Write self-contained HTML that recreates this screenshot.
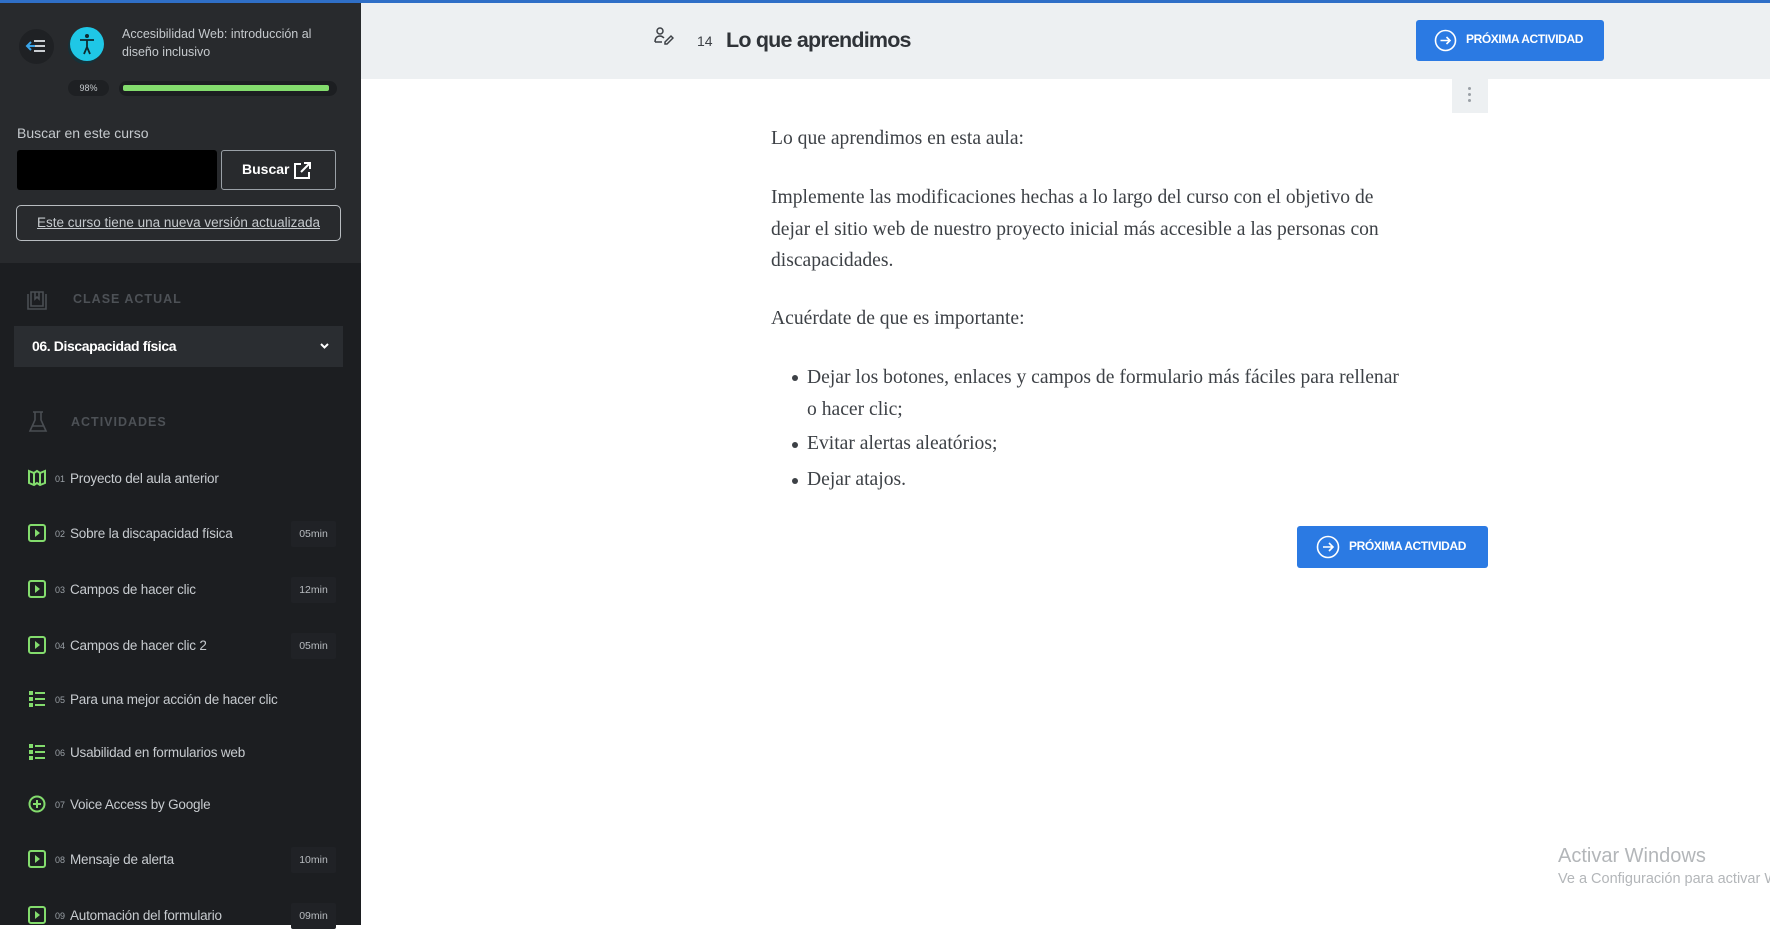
<!DOCTYPE html>
<html><head><meta charset="utf-8"><style>
*{margin:0;padding:0;box-sizing:border-box}
body{width:1770px;height:925px;overflow:hidden;background:#fff;font-family:"Liberation Sans",sans-serif;position:relative}
.abs{position:absolute}
#topline{left:0;top:0;width:1770px;height:3px;background:#2f6fc7;z-index:5}
#side{left:0;top:0;width:361px;height:925px;background:#1c1e21}
#sidetop{left:0;top:0;width:361px;height:263px;background:#282a2d}
.t{white-space:nowrap}
.item{position:absolute;left:0;width:361px;height:30px}
.item svg{position:absolute;left:28px;top:4px}
.item .n{position:absolute;left:55px;top:9px;font-size:9px;color:#9aa0a6}
.item .l{position:absolute;left:70px;top:6px;font-size:13.5px;color:#c7cbcf;letter-spacing:-0.2px}
.item .d{position:absolute;left:291px;top:1px;width:45px;height:26px;background:#202226;color:#b8bcc0;font-size:10.5px;text-align:center;line-height:26px;border-radius:2px}
.btn{background:#2b7ae3;border-radius:3px;color:#fff;font-weight:bold;font-size:12px;letter-spacing:-0.3px}
.p{font-family:"Liberation Serif",serif;font-size:19.6px;color:#3d4146;white-space:nowrap;position:absolute;left:771px}
</style></head><body>
<div id="topline" class="abs"></div>
<div id="side" class="abs"></div>
<div id="sidetop" class="abs"></div>
<div class="abs" style="left:19px;top:29px;width:35px;height:35px;border-radius:50%;background:#1f2124"></div>
<svg class="abs" style="left:25px;top:37px" width="22" height="18" viewBox="0 0 22 18"><path d="M9 4H20M9 9H20M9 14H20" stroke="#c9cdd1" stroke-width="2"/><path d="M2 9H10M6 5L2 9L6 13" stroke="#3aa4e8" stroke-width="2" fill="none"/></svg>
<div class="abs" style="left:70px;top:27px;width:34px;height:34px;border-radius:50%;background:#1fc7e6;box-shadow:-2px 3px 0 #15323a"></div>
<svg class="abs" style="left:78px;top:33px" width="18" height="22" viewBox="0 0 18 22"><circle cx="9" cy="3" r="2" fill="#0e2a30"/><path d="M2 7H16M9 7V14M9 14L6 21M9 14L12 21" stroke="#0e2a30" stroke-width="1.8" fill="none"/></svg>
<div class="abs t" style="left:122px;top:25px;font-size:12.5px;color:#c5c9cd;line-height:18px">Accesibilidad Web: introducción al<br>diseño inclusivo</div>
<div class="abs" style="left:68px;top:80px;width:41px;height:16px;border-radius:8px;background:#1e2023;color:#c5c9cd;font-size:9px;text-align:center;line-height:16px">98%</div>
<div class="abs" style="left:119px;top:81px;width:218px;height:15px;border-radius:8px;background:#1c1e21"></div>
<div class="abs" style="left:123px;top:85px;width:206px;height:6px;border-radius:2px;background:#83dc6d"></div>
<div class="abs t" style="left:17px;top:125px;font-size:14px;color:#c5c9cd">Buscar en este curso</div>
<div class="abs" style="left:17px;top:150px;width:200px;height:40px;background:#000;border-radius:3px"></div>
<div class="abs" style="left:221px;top:150px;width:115px;height:40px;border:1px solid #9aa0a6;border-radius:3px;color:#fff;font-weight:bold;font-size:14px;line-height:36px;padding-left:20px">Buscar</div>
<svg class="abs" style="left:293px;top:161px" width="19" height="19" viewBox="0 0 19 19"><path d="M8 3H2V17H16V11M11 2H17V8M17 2L8 11" stroke="#fff" stroke-width="2" fill="none"/></svg>
<div class="abs" style="left:16px;top:205px;width:325px;height:36px;border:1px solid #b8bcc0;border-radius:5px;text-align:center;line-height:34px;font-size:13.5px;color:#c5c9cd;text-decoration:underline">Este curso tiene una nueva versión actualizada</div>
<svg class="abs" style="left:26px;top:291px" width="22" height="20" viewBox="0 0 22 20"><path d="M2 3V18H20V3M5 1V15H17V1Z M9 1V8L11 6L13 8V1" stroke="#4a4e53" stroke-width="1.6" fill="none"/></svg>
<div class="abs t" style="left:73px;top:292px;font-size:12.5px;font-weight:bold;letter-spacing:1px;color:#4d5156">CLASE ACTUAL</div>
<div class="abs" style="left:14px;top:326px;width:329px;height:41px;background:#2a2d31"></div>
<div class="abs t" style="left:32px;top:338px;font-size:14px;font-weight:bold;color:#fff;letter-spacing:-0.4px">06. Discapacidad física</div>
<svg class="abs" style="left:319px;top:342px" width="11" height="8" viewBox="0 0 11 8"><path d="M2 2L5.5 5.5L9 2" stroke="#fff" stroke-width="2" fill="none"/></svg>
<svg class="abs" style="left:28px;top:410px" width="20" height="24" viewBox="0 0 20 24"><path d="M5 2H15M7 2V10L2 21H18L13 10V2M4 16H16" stroke="#4a4e53" stroke-width="1.6" fill="none"/></svg>
<div class="abs t" style="left:71px;top:415px;font-size:12.5px;font-weight:bold;letter-spacing:1px;color:#4d5156">ACTIVIDADES</div>

<div class="item" style="top:465px"><svg width="18" height="18" viewBox="0 0 18 18"><path d="M1 2L6 4L9 2L12 4L17 2V14L12 16L9 14L6 16L1 14Z M6 4V16M12 4V16" stroke="#83dc6d" stroke-width="2" fill="none"/></svg><span class="n">01</span><span class="l">Proyecto del aula anterior</span></div>
<div class="item" style="top:520px"><svg width="18" height="18" viewBox="0 0 18 18"><rect x="1" y="1" width="16" height="16" rx="2" stroke="#83dc6d" stroke-width="2" fill="none"/><path d="M7 5L12 9L7 13Z" fill="#83dc6d"/></svg><span class="n">02</span><span class="l">Sobre la discapacidad física</span><span class="d">05min</span></div>
<div class="item" style="top:576px"><svg width="18" height="18" viewBox="0 0 18 18"><rect x="1" y="1" width="16" height="16" rx="2" stroke="#83dc6d" stroke-width="2" fill="none"/><path d="M7 5L12 9L7 13Z" fill="#83dc6d"/></svg><span class="n">03</span><span class="l">Campos de hacer clic</span><span class="d">12min</span></div>
<div class="item" style="top:632px"><svg width="18" height="18" viewBox="0 0 18 18"><rect x="1" y="1" width="16" height="16" rx="2" stroke="#83dc6d" stroke-width="2" fill="none"/><path d="M7 5L12 9L7 13Z" fill="#83dc6d"/></svg><span class="n">04</span><span class="l">Campos de hacer clic 2</span><span class="d">05min</span></div>
<div class="item" style="top:686px"><svg width="18" height="18" viewBox="0 0 18 18"><rect x="1" y="1" width="4" height="4" fill="#83dc6d"/><rect x="1" y="7" width="4" height="4" fill="#83dc6d"/><rect x="1" y="13" width="4" height="4" fill="#83dc6d"/><path d="M7 3H17M7 9H17M7 15H17" stroke="#83dc6d" stroke-width="2"/></svg><span class="n">05</span><span class="l">Para una mejor acción de hacer clic</span></div>
<div class="item" style="top:739px"><svg width="18" height="18" viewBox="0 0 18 18"><rect x="1" y="1" width="4" height="4" fill="#83dc6d"/><rect x="1" y="7" width="4" height="4" fill="#83dc6d"/><rect x="1" y="13" width="4" height="4" fill="#83dc6d"/><path d="M7 3H17M7 9H17M7 15H17" stroke="#83dc6d" stroke-width="2"/></svg><span class="n">06</span><span class="l">Usabilidad en formularios web</span></div>
<div class="item" style="top:791px"><svg width="18" height="18" viewBox="0 0 18 18"><circle cx="9" cy="9" r="7.5" stroke="#83dc6d" stroke-width="2" fill="none"/><path d="M9 5V13M5 9H13" stroke="#83dc6d" stroke-width="2"/></svg><span class="n">07</span><span class="l">Voice Access by Google</span></div>
<div class="item" style="top:846px"><svg width="18" height="18" viewBox="0 0 18 18"><rect x="1" y="1" width="16" height="16" rx="2" stroke="#83dc6d" stroke-width="2" fill="none"/><path d="M7 5L12 9L7 13Z" fill="#83dc6d"/></svg><span class="n">08</span><span class="l">Mensaje de alerta</span><span class="d">10min</span></div>
<div class="item" style="top:902px"><svg width="18" height="18" viewBox="0 0 18 18"><rect x="1" y="1" width="16" height="16" rx="2" stroke="#83dc6d" stroke-width="2" fill="none"/><path d="M7 5L12 9L7 13Z" fill="#83dc6d"/></svg><span class="n">09</span><span class="l">Automación del formulario</span><span class="d">09min</span></div>

<div class="abs" style="left:361px;top:3px;width:1409px;height:76px;background:#edf0f2"></div>
<svg class="abs" style="left:654px;top:27px" width="20" height="18" viewBox="0 0 20 18"><circle cx="6" cy="4" r="3" stroke="#3d4146" stroke-width="1.5" fill="none"/><path d="M1 15C1 11 3 9 6 9C8 9 9 10 10 11M1 15H8M11 15L17 9L19 11L13 17H11Z" stroke="#3d4146" stroke-width="1.5" fill="none"/></svg>
<div class="abs t" style="left:697px;top:33px;font-size:14px;color:#3d4146">14</div>
<div class="abs t" style="left:726px;top:28px;font-size:21.5px;font-weight:bold;color:#2f3338;letter-spacing:-0.8px">Lo que aprendimos</div>
<div class="abs btn" style="left:1416px;top:20px;width:188px;height:41px"></div>
<svg class="abs" style="left:1434px;top:29px" width="23" height="23" viewBox="0 0 23 23"><circle cx="11.5" cy="11.5" r="10" stroke="#fff" stroke-width="1.6" fill="none"/><path d="M6.5 11.5H16M12.5 8L16 11.5L12.5 15" stroke="#fff" stroke-width="1.6" fill="none"/></svg>
<div class="abs t" style="left:1466px;top:32px;font-size:12px;font-weight:bold;color:#fff;letter-spacing:-0.4px">PRÓXIMA ACTIVIDAD</div>
<div class="abs" style="left:1452px;top:79px;width:36px;height:34px;background:#edf0f2"></div>
<div class="abs" style="left:1468px;top:87px;width:3px;height:3px;border-radius:50%;background:#9aa0a6;box-shadow:0 6px 0 #9aa0a6,0 12px 0 #9aa0a6"></div>

<div class="p" style="top:128px">Lo que aprendimos en esta aula:</div>
<div class="p" style="top:182px;line-height:31.6px">Implemente las modificaciones hechas a lo largo del curso con el objetivo de<br>dejar el sitio web de nuestro proyecto inicial más accesible a las personas con<br>discapacidades.</div>
<div class="p" style="top:308px">Acuérdate de que es importante:</div>
<div class="p" style="left:807px;top:362px;line-height:31.6px">Dejar los botones, enlaces y campos de formulario más fáciles para rellenar<br>o hacer clic;</div>
<div class="p" style="left:807px;top:433px">Evitar alertas aleatórios;</div>
<div class="p" style="left:807px;top:469px">Dejar atajos.</div>
<div class="abs" style="left:792px;top:375px;width:6px;height:6px;border-radius:50%;background:#3d4146"></div>
<div class="abs" style="left:792px;top:442px;width:6px;height:6px;border-radius:50%;background:#3d4146"></div>
<div class="abs" style="left:792px;top:478px;width:6px;height:6px;border-radius:50%;background:#3d4146"></div>

<div class="abs btn" style="left:1297px;top:526px;width:191px;height:42px"></div>
<svg class="abs" style="left:1316px;top:535px" width="24" height="24" viewBox="0 0 24 24"><circle cx="12" cy="12" r="10.5" stroke="#fff" stroke-width="1.6" fill="none"/><path d="M7 12H17M13 8L17 12L13 16" stroke="#fff" stroke-width="1.6" fill="none"/></svg>
<div class="abs t" style="left:1349px;top:539px;font-size:12px;font-weight:bold;color:#fff;letter-spacing:-0.4px">PRÓXIMA ACTIVIDAD</div>

<div class="abs t" style="left:1558px;top:845px;font-size:20px;color:#b3b6b9">Activar Windows</div>
<div class="abs t" style="left:1558px;top:871px;font-size:14.5px;color:#b3b6b9">Ve a Configuración para activar Windows.</div>
</body></html>
